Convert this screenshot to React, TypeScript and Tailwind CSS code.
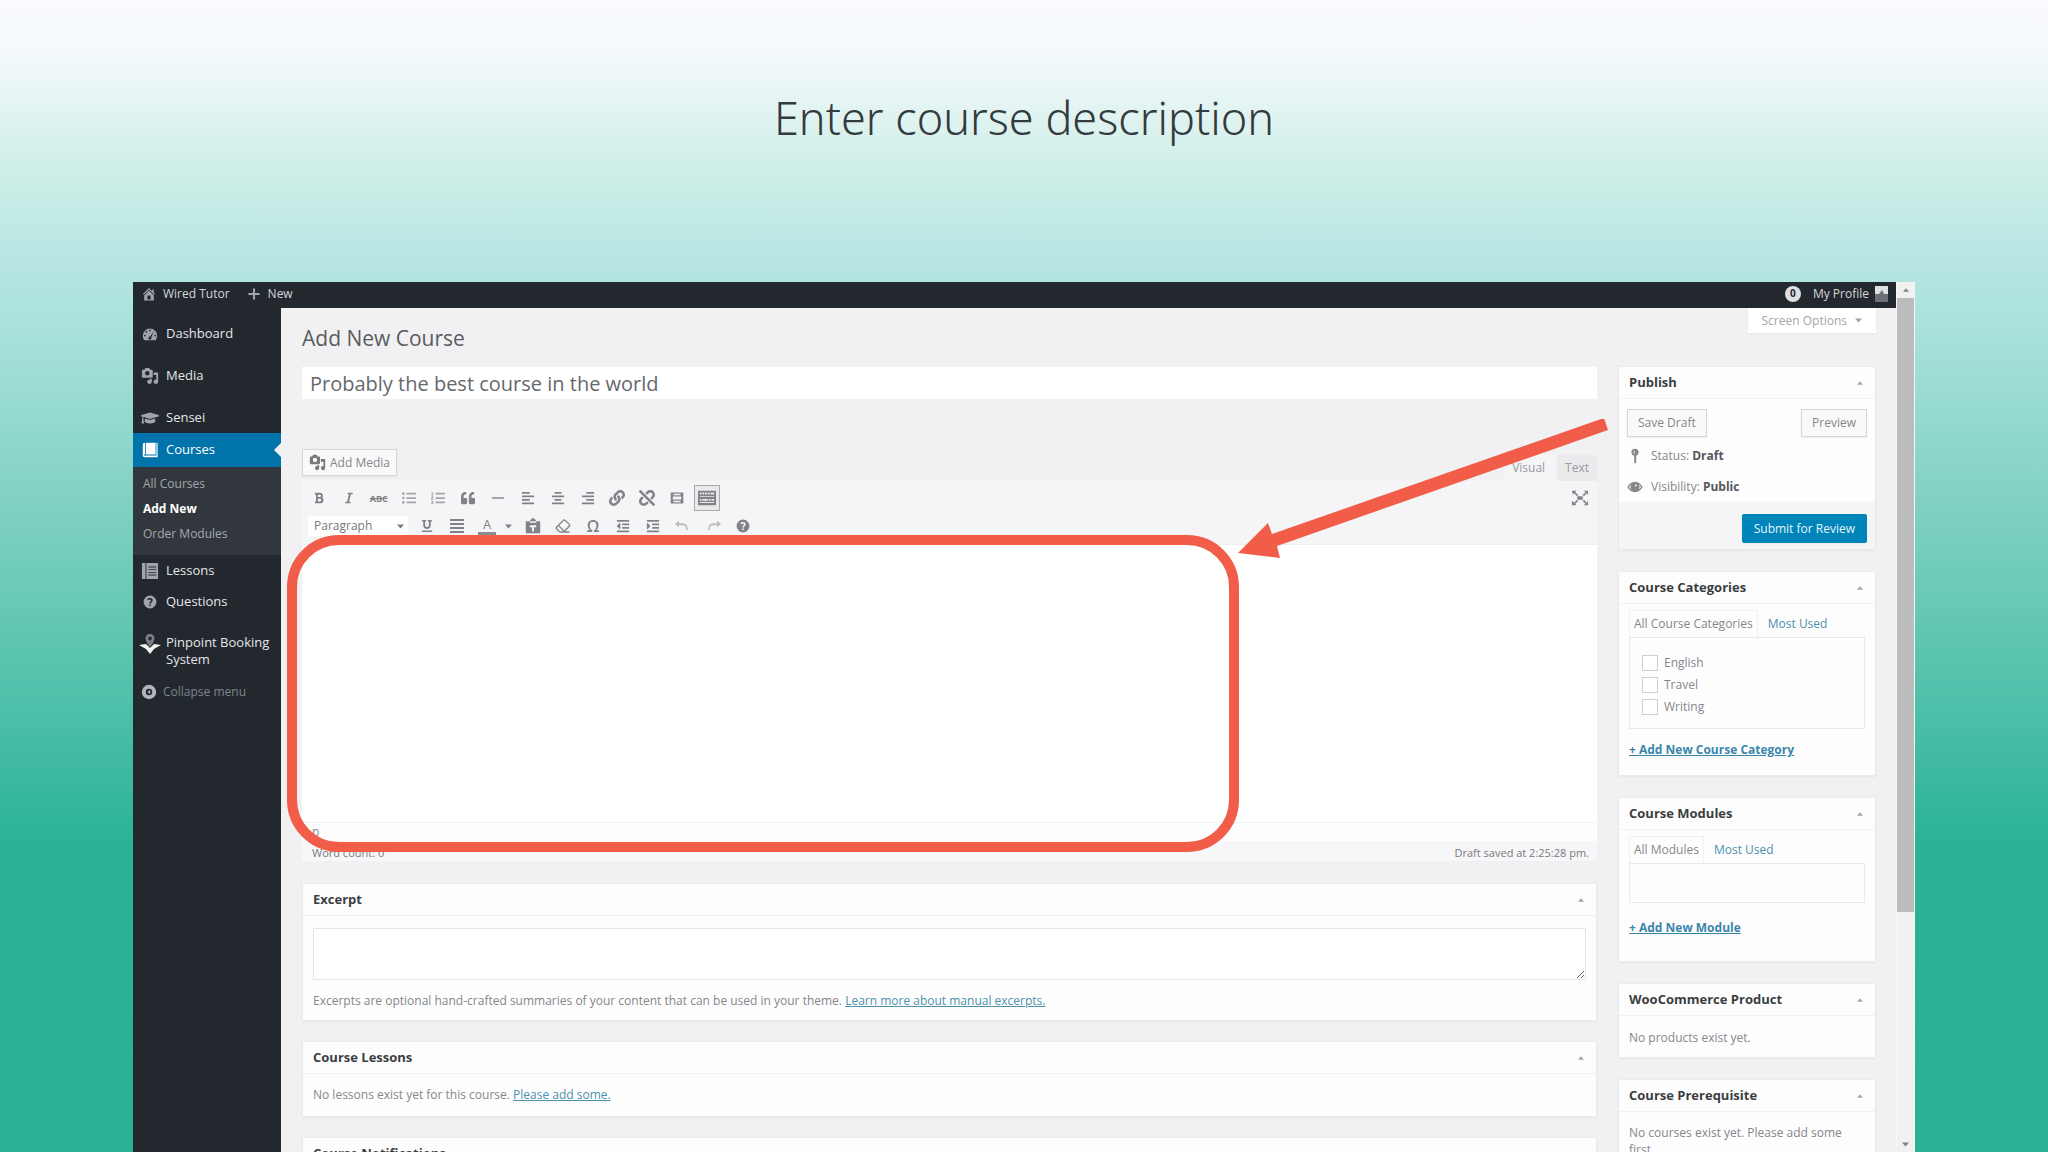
import React from "react";
import { Eraser } from "lucide-react";
import {
  FaAlignCenter,
  FaAlignJustify,
  FaAlignLeft,
  FaAlignRight,
  FaBold,
  FaGraduationCap,
  FaIndent,
  FaItalic,
  FaLink,
  FaListOl,
  FaListUl,
  FaOutdent,
  FaQuoteLeft,
  FaUnderline,
  FaUnlink,
} from "react-icons/fa";

type Children = { children: React.ReactNode };

function Glyph({ d, className }: { d: string; className: string }) {
  return (
    <svg viewBox="0 0 20 20" fill="currentColor" fillRule="evenodd" aria-hidden="true" className={className}>
      <path d={d} />
    </svg>
  );
}

const HOME =
  "M16 8.5l1.53 1.53-1.06 1.06L10 4.6l-6.47 6.49-1.06-1.06L10 2.5l4 4v-2h2v4zm-6-2.46l6 5.99V18H4v-5.97zM12 17v-5H8v5h4z";
const MEDIA =
  "M13 11V4c0-.55-.45-1-1-1h-1.67L9 1H5L3.67 3H2c-.55 0-1 .45-1 1v7c0 .55.45 1 1 1h10c.55 0 1-.45 1-1zM7 4.5c1.38 0 2.5 1.12 2.5 2.5S8.38 9.5 7 9.5 4.5 8.38 4.5 7 5.62 4.5 7 4.5zM14 6h5v10.5c0 1.38-1.12 2.5-2.5 2.5S14 17.88 14 16.5s1.12-2.5 2.5-2.5c.17 0 .34.02.5.05V9h-3V6zm-4 8.05V13h2v3.5c0 1.38-1.12 2.5-2.5 2.5S7 17.88 7 16.5 8.12 14 9.5 14c.17 0 .34.02.5.05z";
const GAUGE =
  "M3.76 17h12.48A8 8 0 0 0 18 12a8 8 0 0 0-16 0c0 1.9.66 3.6 1.76 5zM10 5a1 1 0 1 1 0 2 1 1 0 0 1 0-2zM6 6.6a1 1 0 1 1 0 2 1 1 0 0 1 0-2zM14.6 6.4l-3.2 7.2a1.7 1.7 0 1 1-1.3-.8zM4.2 10.8a1 1 0 1 1 0 2 1 1 0 0 1 0-2zM15.8 10.8a1 1 0 1 1 0 2 1 1 0 0 1 0-2z";
const BOOK = "M1 3.5C1 2 2 1 3.5 1H4v14.5H2.5V17H18V1h1.5v18H3a2 2 0 0 1-2-2zM5 1h12v14.5H5z";
const LESSONS = "M1 1h4v18H1zM6 1h13v18H6zM8 5h9v1H8zM8 8h9v1H8zM8 11h9v1H8zM8 14h9v1H8z";
const HELP =
  "M10 2a8 8 0 1 1 0 16 8 8 0 0 1 0-16zM9 13v2h2v-2zM11 12c0-1.5 2.3-1.8 2.3-4.2C13.3 6 12 5 10 5 8.5 5 7.3 5.6 6.5 6.7l1.4 1.1C8.4 7.2 9 6.9 9.8 6.9c.9 0 1.4.4 1.4 1.1C11.2 9.3 9 9.6 9 12z";
const COLLAPSE = "M10 1a9 9 0 1 1 0 18 9 9 0 0 1 0-18zM10 6a4 4 0 1 0 0 8 4 4 0 0 0 0-8zM11.500 7.500v5L8 10z";
const PLUS = "M8.7 3h2.6v5.7H17v2.6h-5.7V17H8.7v-5.7H3V8.7h5.7z";
const PIN = "M10 1a4.5 4.5 0 0 1 4.5 4.5c0 2-1.3 3.6-3 4.2V18l-1 1.5L9 18V9.7a4.5 4.5 0 0 1-3.5-4.2A4.5 4.5 0 0 1 10 1zM8.5 3.500v4h1v-4z";
const EYE =
  "M10 3.500c4.500 0 8 3.500 9.500 6.500-1.500 3-5 6.500-9.500 6.500S2 13 .5 10C2 7 5.500 3.500 10 3.500zM5.600 6.600C4.300 7.400 3.200 8.700 2.500 10c.7 1.300 1.800 2.600 3.100 3.400A5.600 5.600 0 0 1 5.600 6.600zM14.400 6.600a5.600 5.600 0 0 1 0 6.800c1.300-.8 2.400-2.100 3.100-3.400-.7-1.300-1.800-2.600-3.100-3.400zM10 7v2h2V7z";
const MORE = "M1 2h18v6H1zM5 4v2h10V4zM1 12h18v6H1zM5 14v2h10v-2zM1 8h3v4H1zM16 8h3v4h-3z";
const KITCHEN =
  "M0 2h20v16H0zM2 4v2h2V4zM5 4v2h2V4zM8 4v2h2V4zM11 4v2h2V4zM14 4v2h4V4zM2 8v1h16V8zM2 11v2h2v-2zM5 11v2h6v-2zM12 11v2h2v-2zM15 11v2h3v-2zM2 14.5v1h16v-1z";
const PASTE = "M1 4h5l1-2h1a2 2 0 0 1 4 0h1l1 2h5v15H1zM6 4v2h8V4zM6 9v2.500h2.800V17h2.400v-5.500H14V9z";
const EXPAND =
  "M1 2h5L4.8 3.5 8 6.7 6.7 8 3.5 4.8 2 6zM19 2v5l-1.5-2.2L14.3 8 13 6.7l3.2-3.2L14 2zM1 18v-5l2.5 2.2L6.7 12 8 13.3l-3.2 3.2L6 18zM19 18h-5l2.2-1.5-3.2-3.2 1.3-1.3 3.2 3.2L19 13zM7 8h6v4H7z";
const UNDO = "M5 3v3.5h4.5c4.5 0 6.5 3 6.5 8.5h-2c0-4.5-1.5-6-4.5-6H5V12L0 7.5z";
const REDO = "M15 3v3.5h-4.5C6 6.5 4 9.5 4 15h2c0-4.5 1.5-6 4.5-6H15V12l5-4.5z";

function Caret({ up = false }: { up?: boolean }) {
  return (
    <svg viewBox="0 0 10 6" fill="currentColor" aria-hidden="true" className={up ? "h-1 w-1.5" : "h-[5px] w-[7px]"}>
      <path d={up ? "M0 6L5 0l5 6z" : "M0 0h10L5 6z"} />
    </svg>
  );
}

function MenuItem({ icon, label, active = false }: { icon: React.ReactNode; label: string; active?: boolean }) {
  return (
    <a
      href="#"
      className={
        active
          ? "relative flex h-[34px] items-center gap-[7px] bg-[#0073aa] pl-2 text-white"
          : "flex h-[31px] items-center gap-[7px] pl-2 text-[#e4e6e8]"
      }
    >
      <span className={active ? "flex w-[18px] justify-center text-white" : "flex w-[18px] justify-center text-[#a0a5aa]"}>
        {icon}
      </span>
      {label}
      {active && (
        <svg viewBox="0 0 7 14" className="absolute right-0 h-3.5 w-[7px]" aria-hidden="true">
          <path d="M7 0v14L0 7z" fill="#f1f1f3" />
        </svg>
      )}
    </a>
  );
}

function ToolButton({ label, active = false, children }: { label: string; active?: boolean } & Children) {
  return (
    <button
      type="button"
      aria-label={label}
      className={
        active
          ? "flex size-[26px] items-center justify-center border border-[#aaaaac] bg-[#e9e9eb]"
          : "flex size-[26px] items-center justify-center"
      }
    >
      {children}
    </button>
  );
}

function Box({ title, children }: { title: string } & Children) {
  return (
    <section className="border border-[#ebebed] bg-[#fefdfe] shadow-xs">
      <header className="flex h-8 items-center justify-between border-b border-[#f1f1f3] pr-3 pl-2.5">
        <h2 className="text-[13px] font-bold text-[#3b3e41]">{title}</h2>
        <button type="button" aria-label={`Toggle ${title}`} className="text-[#a3a5a8]">
          <Caret up />
        </button>
      </header>
      {children}
    </section>
  );
}

const grayButton = "border border-[#d6d6d8] bg-[#f9f9fa] text-[#85878a] shadow-xs";
const link = "text-[#4b91ac] underline";
const boldLink = "text-xs font-bold text-[#3a86ab] underline";

function Sidebar() {
  return (
    <nav aria-label="Admin menu" className="w-[148px] shrink-0 bg-[#23282f] pt-2.5 text-[13px] font-medium">
      <MenuItem icon={<Glyph d={GAUGE} className="size-[18px]" />} label="Dashboard" />
      <div className="h-[11px]" />
      <MenuItem icon={<Glyph d={MEDIA} className="size-[18px]" />} label="Media" />
      <div className="h-[11px]" />
      <MenuItem icon={<FaGraduationCap className="size-[18px]" />} label="Sensei" />
      <MenuItem icon={<Glyph d={BOOK} className="size-4" />} label="Courses" active />
      <div className="flex flex-col gap-[7px] bg-[#32373e] px-2.5 pt-2 pb-3 text-xs leading-[18px] text-[#a3a8ad]">
        <a href="#">All Courses</a>
        <a href="#" className="font-bold text-white">Add New</a>
        <a href="#">Order Modules</a>
      </div>
      <MenuItem icon={<Glyph d={LESSONS} className="size-[18px]" />} label="Lessons" />
      <MenuItem icon={<Glyph d={HELP} className="size-4" />} label="Questions" />
      <div className="h-[11px]" />
      <a href="#" className="flex gap-[7px] py-1.5 pl-1.5 leading-[17px] text-[#e4e6e8]">
        <svg viewBox="0 0 22 22" aria-hidden="true" className="-mr-0.5 size-[22px] shrink-0">
          <path d="M0 11l7-1 4 4 4-4 7 1-7 4-4 5-4-5z" fill="#f3f3f3" />
          <path d="M11 0a4.500 4.500 0 0 1 4.500 4.500c0 3-4.500 8.500-4.500 8.500s-4.500-5.500-4.500-8.500A4.500 4.500 0 0 1 11 0z" fill="#7d8288" />
          <circle cx="11" cy="4.500" r="2" fill="#2a2f36" />
        </svg>
        <span>Pinpoint Booking System</span>
      </a>
      <button type="button" className="flex h-9 items-center gap-1.5 pl-2 text-xs text-[#7f858b]">
        <Glyph d={COLLAPSE} className="size-4 text-[#b1b5b9]" />
        Collapse menu
      </button>
    </nav>
  );
}

function Toolbar() {
  return (
    <div className="flex h-16 items-start justify-between border-b border-[#eeeef0] bg-[#f5f5f7] px-1 pt-1 text-[#808285]">
      <div>
        <div className="flex w-[414px] justify-between">
          <ToolButton label="Bold"><FaBold className="size-3" /></ToolButton>
          <ToolButton label="Italic"><FaItalic className="size-3" /></ToolButton>
          <ToolButton label="Strikethrough"><s className="text-[9px] leading-none font-bold">ABC</s></ToolButton>
          <ToolButton label="Bulleted list"><FaListUl className="size-3.5 text-[#a3a5a8]" /></ToolButton>
          <ToolButton label="Numbered list"><FaListOl className="size-3.5 text-[#a3a5a8]" /></ToolButton>
          <ToolButton label="Blockquote"><FaQuoteLeft className="size-3.5" /></ToolButton>
          <ToolButton label="Horizontal line"><span className="h-0.5 w-3 bg-[#a3a5a8]" /></ToolButton>
          <ToolButton label="Align left"><FaAlignLeft className="size-3.5" /></ToolButton>
          <ToolButton label="Align center"><FaAlignCenter className="size-3.5" /></ToolButton>
          <ToolButton label="Align right"><FaAlignRight className="size-3.5" /></ToolButton>
          <ToolButton label="Insert link"><FaLink className="size-4" /></ToolButton>
          <ToolButton label="Remove link"><FaUnlink className="size-4" /></ToolButton>
          <ToolButton label="Read more tag"><Glyph d={MORE} className="size-3.5" /></ToolButton>
          <ToolButton label="Toolbar toggle" active><Glyph d={KITCHEN} className="size-[18px]" /></ToolButton>
        </div>
        <div className="mt-0.5 flex items-center gap-1 pl-0.5">
          <div className="relative mr-0.5 text-[#77797c]">
            <select aria-label="Format" className="block h-5 w-[100px] appearance-none bg-white pl-1.5 text-xs">
              <option>Paragraph</option>
            </select>
            <span className="pointer-events-none absolute top-2 right-1"><Caret /></span>
          </div>
          <ToolButton label="Underline"><FaUnderline className="size-3" /></ToolButton>
          <ToolButton label="Justify"><FaAlignJustify className="size-4" /></ToolButton>
          <div className="flex">
            <ToolButton label="Text color">
              <span className="w-[18px] border-b-[3px] border-[#8b8d90] text-center text-[13px] leading-[15px]">A</span>
            </ToolButton>
            <button type="button" aria-label="Text color menu" className="flex w-4 items-center justify-center">
              <Caret />
            </button>
          </div>
          <ToolButton label="Paste as text"><Glyph d={PASTE} className="size-4" /></ToolButton>
          <ToolButton label="Clear formatting"><Eraser className="size-4" /></ToolButton>
          <ToolButton label="Special character"><span className="text-base leading-none font-semibold">Ω</span></ToolButton>
          <ToolButton label="Decrease indent"><FaOutdent className="size-3.5" /></ToolButton>
          <ToolButton label="Increase indent"><FaIndent className="size-3.5" /></ToolButton>
          <ToolButton label="Undo"><Glyph d={UNDO} className="size-4 text-[#bcbec0]" /></ToolButton>
          <ToolButton label="Redo"><Glyph d={REDO} className="size-4 text-[#bcbec0]" /></ToolButton>
          <ToolButton label="Help"><Glyph d={HELP} className="size-4" /></ToolButton>
        </div>
      </div>
      <ToolButton label="Fullscreen"><Glyph d={EXPAND} className="size-[18px]" /></ToolButton>
    </div>
  );
}

function Editor() {
  return (
    <div className="mt-[50px]">
      <div className="flex h-8 items-start justify-between">
        <button type="button" className={`flex h-[27px] items-center gap-1 px-1.5 text-xs ${grayButton}`}>
          <Glyph d={MEDIA} className="size-[17px] text-[#77797c]" />
          Add Media
        </button>
        <div className="mt-1.5 flex h-[26px] text-xs text-[#97999c]">
          <button type="button" className="bg-[#f5f5f7] pr-3 pl-2">Visual</button>
          <button type="button" className="bg-[#ebebed] px-2">Text</button>
        </div>
      </div>
      <div className="relative">
        <Toolbar />
        <textarea aria-label="Course description" className="block h-[277px] w-full resize-none bg-white p-3 outline-none" />
        <div className="h-[19px] border-t border-[#f1f1f3] bg-[#fefefe] pl-2.5 text-xs leading-[18px] text-[#85878a]">p</div>
        <div className="flex h-5 items-center justify-between bg-[#f7f6f8] pt-1 pr-2 pl-2.5 text-[11px] text-[#77797c]">
          <span>Word count: 0</span>
          <span>Draft saved at 2:25:28 pm.</span>
        </div>
        <div className="pointer-events-none absolute top-[54px] -left-[15px] h-[317px] w-[952px] rounded-[52px] border-10 border-[#f15d48]" />
        <svg
          viewBox="0 0 372 140"
          className="pointer-events-none absolute -top-[62px] left-[936px] h-[140px] w-[372px]"
          aria-hidden="true"
        >
          <path d="M366 -1l4 12L39 127l3 12-42-5 30-30 4 11z" fill="#f15d48" />
        </svg>
      </div>
    </div>
  );
}

function MainColumn() {
  return (
    <main className="min-w-0 flex-1 pt-3.5">
      <h1 className="text-[21px] leading-8 text-[#5a5c5f]">Add New Course</h1>
      <input
        aria-label="Course title"
        defaultValue="Probably the best course in the world"
        className="mt-[13px] block h-8 w-full bg-white px-2 text-xl text-[#66686b] outline-none"
      />
      <Editor />
      <div className="mt-[22px] flex flex-col gap-5">
        <Box title="Excerpt">
          <div className="px-2.5 pt-3 pb-2.5">
            <textarea aria-label="Excerpt" className="block h-[52px] w-full border border-[#e6e6e8] bg-white" />
            <p className="mt-3 text-xs leading-[18px] text-[#85878a]">
              Excerpts are optional hand-crafted summaries of your content that can be used in your theme.{" "}
              <a href="#" className={link}>Learn more about manual excerpts.</a>
            </p>
          </div>
        </Box>
        <Box title="Course Lessons">
          <p className="px-2.5 py-3 text-xs leading-[18px] text-[#85878a]">
            No lessons exist yet for this course. <a href="#" className={link}>Please add some.</a>
          </p>
        </Box>
        <Box title="Course Notifications">
          <div className="h-20" />
        </Box>
      </div>
    </main>
  );
}

function PublishBox() {
  return (
    <Box title="Publish">
      <div className="px-2 pt-2.5">
        <div className="flex justify-between text-xs">
          <button type="button" className={`h-7 px-2.5 ${grayButton}`}>Save Draft</button>
          <button type="button" className={`h-7 px-2.5 ${grayButton}`}>Preview</button>
        </div>
        <div className="flex flex-col gap-[13px] pt-2.5 pb-1.5 text-xs leading-[18px] text-[#85878a]">
          <p className="flex items-center gap-2">
            <Glyph d={PIN} className="size-4" />
            <span>Status: <b className="text-[#55575a]">Draft</b></span>
          </p>
          <p className="flex items-center gap-2">
            <Glyph d={EYE} className="size-4" />
            <span>Visibility: <b className="text-[#55575a]">Public</b></span>
          </p>
        </div>
      </div>
      <div className="flex h-[47px] items-end justify-end bg-[#f5f5f7] pr-2 pb-1.5">
        <button type="button" className="h-[29px] rounded-xs bg-[#0085ba] px-3 text-xs text-[#e6f4fa] shadow-xs">
          Submit for Review
        </button>
      </div>
    </Box>
  );
}

function Tabs({ first }: { first: string }) {
  return (
    <div className="flex gap-1.5 text-xs leading-[18px]">
      <button type="button" className="border border-b-0 border-[#f1f1f3] px-1 py-1 text-[#85878a]">{first}</button>
      <button type="button" className="px-1 py-1 text-[#4b91ac]">Most Used</button>
    </div>
  );
}

function SideColumn() {
  return (
    <aside className="w-[258px] shrink-0">
      <div className="flex h-[58px] justify-end">
        <button type="button" className="flex h-[25px] items-center gap-2 bg-white px-3.5 text-xs text-[#a3a5a8] shadow-xs">
          Screen Options <Caret />
        </button>
      </div>
      <div className="flex flex-col gap-[21px]">
        <PublishBox />
        <Box title="Course Categories">
          <div className="px-2.5 pt-1.5 pb-[17px]">
            <Tabs first="All Course Categories" />
            <div className="flex flex-col gap-1 border border-[#e9e9eb] px-3 pt-4 pb-3 text-xs leading-[18px] text-[#85878a]">
              {["English", "Travel", "Writing"].map((name) => (
                <label key={name} className="flex items-center gap-1.5">
                  <input type="checkbox" className="size-4 appearance-none border border-[#cfcfd2] bg-white" />
                  {name}
                </label>
              ))}
            </div>
            <p className="mt-2.5 leading-[18px]"><a href="#" className={boldLink}>+ Add New Course Category</a></p>
          </div>
        </Box>
        <Box title="Course Modules">
          <div className="px-2.5 pt-1.5 pb-[25px]">
            <Tabs first="All Modules" />
            <div className="h-10 border border-[#e9e9eb]" />
            <p className="mt-3.5 leading-[18px]"><a href="#" className={boldLink}>+ Add New Module</a></p>
          </div>
        </Box>
        <Box title="WooCommerce Product">
          <p className="px-2.5 pt-[13px] pb-[11px] text-xs leading-[17px] text-[#85878a]">No products exist yet.</p>
        </Box>
        <Box title="Course Prerequisite">
          <p className="px-2.5 py-3 text-xs leading-[17px] text-[#85878a]">No courses exist yet. Please add some first.</p>
        </Box>
      </div>
    </aside>
  );
}

export default function App() {
  return (
    <div className="flex h-screen flex-col overflow-hidden bg-[linear-gradient(to_bottom,#fafaff_0%,#f3f9fb_5%,#cdeee6_15%,#b9e6e4_22%,#a5e0d8_30%,#7dd0c0_45%,#4cbfa8_62%,#2bb396_73%,#29b295_100%)] font-['Open_Sans',sans-serif]">
      <h1 className="flex h-[282px] shrink-0 justify-center pt-[86px] font-['Noto_Sans',sans-serif] text-[45px] leading-16 font-light text-[#343a3d]">
        Enter course description
      </h1>
      <div className="mx-[133px] flex min-h-0 flex-1">
        <div className="flex min-w-0 flex-1 flex-col bg-[#f1f1f3]">
          <header className="flex h-[26px] shrink-0 items-center bg-[#23282f] px-2 pb-0.5 text-xs font-medium text-[#d5d7d9]">
            <a href="#" className="flex items-center gap-1.5"><Glyph d={HOME} className="size-4 text-[#a0a5aa]" />Wired Tutor</a>
            <a href="#" className="ml-4 flex items-center gap-1.5"><Glyph d={PLUS} className="size-4 text-[#a0a5aa]" />New</a>
            <span className="ml-auto flex size-4 items-center justify-center rounded-full bg-[#dfe0e2] text-[10px] font-bold text-[#23282f]">0</span>
            <a href="#" className="ml-3 flex items-center gap-1.5">
              My Profile
              <svg viewBox="0 0 13 16" aria-hidden="true" className="h-4 w-[13px]">
                <path d="M0 0h13v16H0z" fill="#6b7076" />
                <path d="M0 0h13v8H9L7 4 4 8H0z" fill="#dfe0e2" />
              </svg>
            </a>
          </header>
          <div className="flex min-h-0 flex-1">
            <Sidebar />
            <div className="flex min-w-0 flex-1 gap-[21px] overflow-hidden pr-5 pl-[21px]">
              <MainColumn />
              <SideColumn />
            </div>
          </div>
        </div>
        <div className="flex w-[19px] shrink-0 flex-col items-center border-x border-[#f7f7f8] bg-[#f1f1f2] text-[#7f8184]">
          <span className="flex h-4 items-center"><Caret up /></span>
          <div className="h-[614px] w-full bg-[#bcbcbc]" />
          <span className="mt-auto flex h-4 items-center"><Caret /></span>
        </div>
      </div>
    </div>
  );
}
